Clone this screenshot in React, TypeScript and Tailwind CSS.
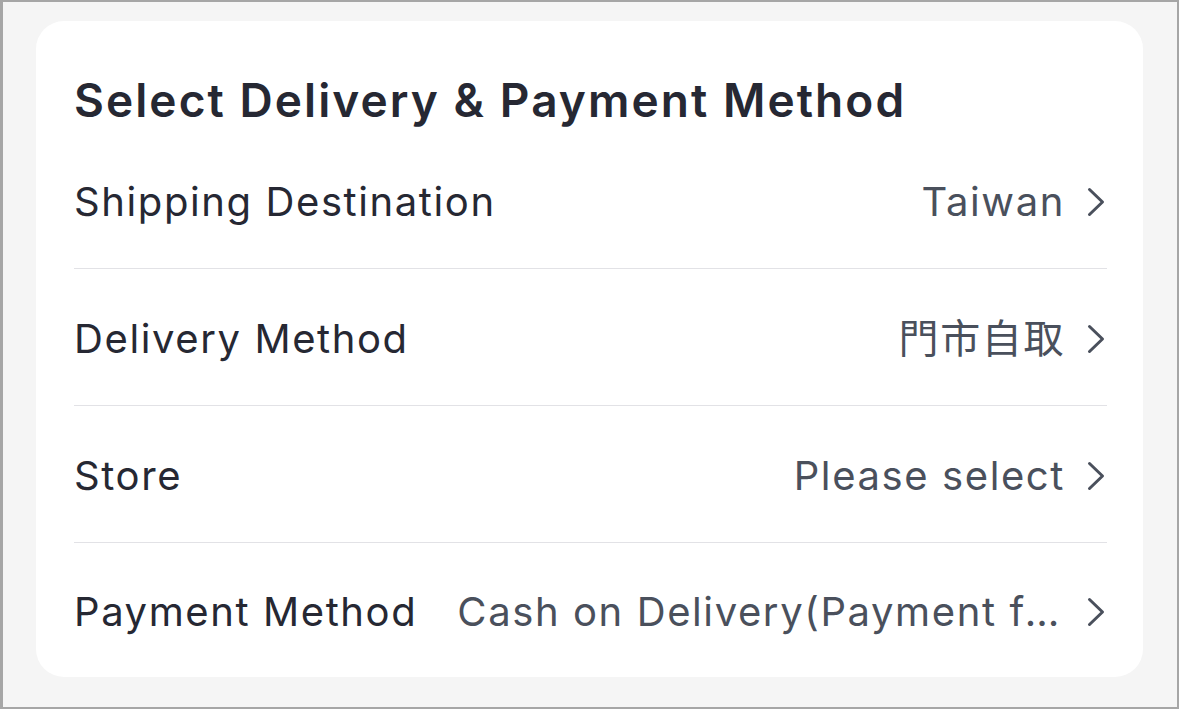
import React from "react";

const Chevron = () => (
  <svg width="22" height="30" viewBox="0 0 22 30" fill="none" className="shrink-0">
    <path d="M4.5 2.5 L17.5 15 L4.5 27.5" stroke="#4a505c" strokeWidth="3" strokeLinecap="round" strokeLinejoin="round" />
  </svg>
);

const rows = [
  { label: "Shipping Destination", value: "Taiwan" },
  { label: "Delivery Method", value: "門市自取" },
  { label: "Store", value: "Please select" },
  { label: "Payment Method", value: "Cash on Delivery(Payment for goods upon pickup)" },
];

export default function App() {
  return (
    <div
      className="w-[1179px] h-[709px] bg-[#f5f5f5] border-t-2 border-b-2 border-l-[3px] border-r-2 border-[#a6a6a6] pt-[19px] pl-[33px] pr-[34px] box-border overflow-hidden"
      style={{ fontFamily: 'Inter, "Noto Sans CJK TC", sans-serif' }}
    >
      <div className="bg-white rounded-[28px] w-[1107px] h-[656px] pl-[38px] pr-[36px] flex flex-col">
        <div className="h-[111px] shrink-0 flex items-end pb-[9px]">
          <h1 className="text-[46px] font-semibold text-[#262833] tracking-[0.045em] leading-none">
            Select Delivery &amp; Payment Method
          </h1>
        </div>
        {rows.map((r, i) => (
          <div key={r.label} className={i < rows.length - 1 ? "shrink-0 border-b border-[#e2e2e6]" : "shrink-0"}>
            <div className={i < rows.length - 1 ? "h-[136px] pt-[3px] flex items-center gap-[40px]" : "h-[134px] pt-[3px] flex items-center gap-[40px]"}>
              <span className="text-[40px] text-[#262833] tracking-[0.04em] whitespace-nowrap shrink-0">{r.label}</span>
              <div className="flex-1 min-w-0 flex items-center justify-end gap-[20px]">
                <span className="text-[40px] text-[#4a505c] tracking-[0.04em] truncate">{r.value}</span>
                <Chevron />
              </div>
            </div>
          </div>
        ))}
      </div>
    </div>
  );
}
